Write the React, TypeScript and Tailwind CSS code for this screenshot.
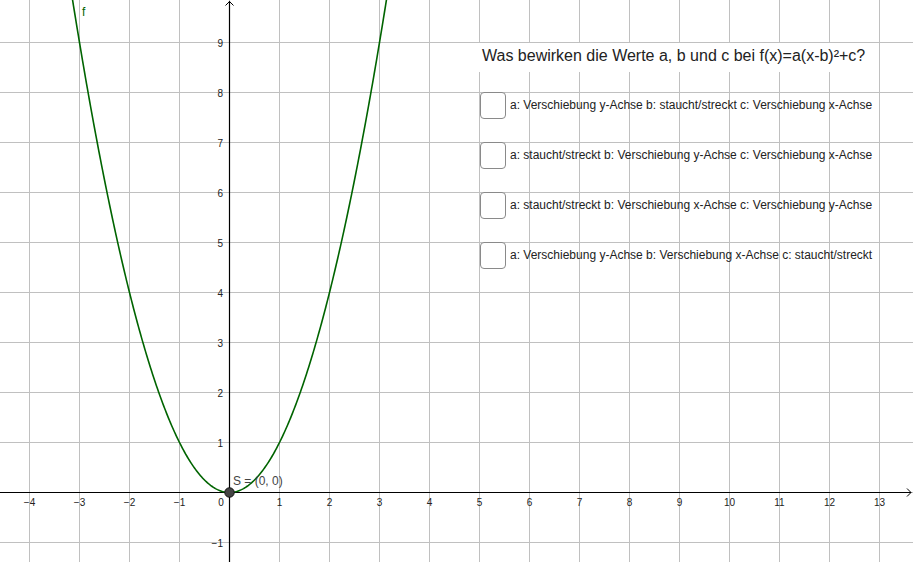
import React from "react";

const X0 = 229.5;
const Y0 = 492.5;
const U = 50;

const xs = Array.from({ length: 18 }, (_, i) => i - 4); // -4..13
const ys = Array.from({ length: 11 }, (_, i) => i - 1); // -1..9

const options = [
  "a: Verschiebung y-Achse b: staucht/streckt c: Verschiebung x-Achse",
  "a: staucht/streckt b: Verschiebung y-Achse c: Verschiebung x-Achse",
  "a: staucht/streckt b: Verschiebung x-Achse c: Verschiebung y-Achse",
  "a: Verschiebung y-Achse b: Verschiebung x-Achse c: staucht/streckt",
];

function label(n: number) {
  return n < 0 ? `\u2212${-n}` : `${n}`;
}

function parabola() {
  const pts: string[] = [];
  for (let x = -3.16; x <= 3.16; x += 0.02) {
    pts.push(`${(X0 + x * U).toFixed(2)},${(Y0 - x * x * U).toFixed(2)}`);
  }
  return pts.join(" ");
}

function Graph() {
  return (
    <svg width={913} height={562} className="absolute inset-0" style={{ fontFamily: '"Liberation Sans", Arial, sans-serif' }}>
      {xs.map((k) => (
        <line key={`gx${k}`} x1={X0 + k * U} y1={0} x2={X0 + k * U} y2={562} stroke="#c0c0c0" strokeWidth={1} />
      ))}
      {ys.map((k) => (
        <line key={`gy${k}`} x1={0} y1={Y0 - k * U} x2={913} y2={Y0 - k * U} stroke="#c0c0c0" strokeWidth={1} />
      ))}

      {/* axes */}
      <line x1={0} y1={Y0} x2={911} y2={Y0} stroke="#000" strokeWidth={1.2} />
      <line x1={X0} y1={562} x2={X0} y2={1} stroke="#000" strokeWidth={1.2} />
      <polyline points={`${X0 - 4},5.5 ${X0},1.5 ${X0 + 4},5.5`} fill="none" stroke="#000" strokeWidth={1} />
      <polyline points={`907,${Y0 - 4} 911,${Y0} 907,${Y0 + 4}`} fill="none" stroke="#000" strokeWidth={1} />

      {/* tick labels */}
      {xs.map((k) =>
        k === 0 ? null : (
          <text key={`lx${k}`} x={X0 + k * U} y={506} fontSize={10} fill="#222" textAnchor="middle">
            {label(k)}
          </text>
        )
      )}
      <text x={221} y={506} fontSize={10} fill="#222" textAnchor="middle">
        0
      </text>
      {ys.map((k) =>
        k === 0 ? null : (
          <text key={`ly${k}`} x={223} y={Y0 - k * U + 4} fontSize={10} fill="#222" textAnchor="end">
            {label(k)}
          </text>
        )
      )}

      {/* function */}
      <polyline points={parabola()} fill="none" stroke="#006400" strokeWidth={1.6} />
      <text x={82} y={16} fontSize={12} fill="#006400">
        f
      </text>

      {/* point S */}
      <text x={233} y={485} fontSize={12} fill="#444">
        S = (0, 0)
      </text>
      <circle cx={X0} cy={Y0} r={4.8} fill="#444" stroke="#000" strokeWidth={0.8} />
    </svg>
  );
}

export default function App() {
  return (
    <div className="relative h-[562px] w-[913px] overflow-hidden bg-white font-['Liberation_Sans',Arial,sans-serif] text-black">
      <Graph />
      <div className="absolute left-[470px] top-[43px] flex flex-col">
        <div className="flex h-[29px] w-[400px] items-center bg-white pb-[3px] pl-[12px] text-[16px] leading-none text-[#222]">
          Was bewirken die Werte a, b und c bei f(x)=a(x-b)²+c?
        </div>
        <div className="mt-[19px] flex flex-col gap-[22px] pl-[10px]">
          {options.map((o) => (
            <label key={o} className="flex h-[28px] items-center gap-[4px]">
              <span className="block h-[27px] w-[26px] rounded-[4px] border-[1.5px] border-[#8a8a8a] bg-white" />
              <span className="text-[12px] leading-none text-[#222]">{o}</span>
            </label>
          ))}
        </div>
      </div>
    </div>
  );
}
